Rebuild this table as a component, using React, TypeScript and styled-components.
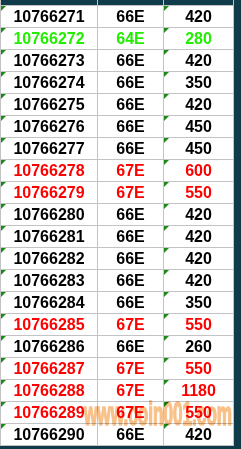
import styled, { createGlobalStyle } from 'styled-components';

const GlobalStyle = createGlobalStyle`
    html, body {
        margin: 0;
        padding: 0;
        background: #0f3b4b;
    }
    body {
        font-family: "Liberation Sans", Arial, sans-serif;
    }
`;

const Page = styled.div`
    position: relative;
    width: 241px;
    height: 449px;
    overflow: hidden;
    background: #0f3b4b;
`;

const Sheet = styled.div`
    display: grid;
    grid-template-columns: 96px 65px 69px;
    grid-auto-rows: 21px;
    grid-template-rows: 5px;
    gap: 1px;
    width: 234px;
    padding: 0 1px 1px 1px;
    box-sizing: border-box;
    background: #c3c3c3;
`;

const HeadCell = styled.div`
    background: #0f3b4b;
`;

const Cell = styled.div<{ $tone: string; $mark?: boolean }>`
    position: relative;
    display: flex;
    align-items: center;
    justify-content: center;
    background: #ffffff;
    color: ${(p) => p.$tone};
    font-size: 16px;
    font-weight: bold;
    line-height: 1;
    &::before {
        content: '';
        display: ${(p) => (p.$mark ? 'block' : 'none')};
        position: absolute;
        top: 0;
        left: 0;
        border-top: 5px solid #1b8a1b;
        border-right: 5px solid transparent;
    }
`;

// site watermark laid over the last rows
const Watermark = styled.div`
    position: absolute;
    left: 84px;
    top: 395px;
    font-size: 33px;
    font-weight: bold;
    color: #f9c088;
    -webkit-text-stroke: 1.6px #f9c088;
    mix-blend-mode: multiply;
    transform: scaleX(0.52);
    transform-origin: left top;
    white-space: nowrap;
    pointer-events: none;
`;

const colours: Record<string, string> = {
    k: '#000000',
    g: '#22ee00',
    r: '#ff0000',
};

const rows: [string, string, string, string][] = [
    ['10766271', '66E', '420', 'k'],
    ['10766272', '64E', '280', 'g'],
    ['10766273', '66E', '420', 'k'],
    ['10766274', '66E', '350', 'k'],
    ['10766275', '66E', '420', 'k'],
    ['10766276', '66E', '450', 'k'],
    ['10766277', '66E', '450', 'k'],
    ['10766278', '67E', '600', 'r'],
    ['10766279', '67E', '550', 'r'],
    ['10766280', '66E', '420', 'k'],
    ['10766281', '66E', '420', 'k'],
    ['10766282', '66E', '420', 'k'],
    ['10766283', '66E', '420', 'k'],
    ['10766284', '66E', '350', 'k'],
    ['10766285', '67E', '550', 'r'],
    ['10766286', '66E', '260', 'k'],
    ['10766287', '67E', '550', 'r'],
    ['10766288', '67E', '1180', 'r'],
    ['10766289', '67E', '550', 'r'],
    ['10766290', '66E', '420', 'k'],
];

function App() {
    return (
        <Page>
            <GlobalStyle />
            <Sheet>
                <HeadCell />
                <HeadCell />
                <HeadCell />
                {rows.map(([id, grade, price, tone]) => (
                    <>
                        <Cell key={id + 'a'} $tone={colours[tone]} $mark>{id}</Cell>
                        <Cell key={id + 'b'} $tone={colours[tone]}>{grade}</Cell>
                        <Cell key={id + 'c'} $tone={colours[tone]} $mark>{price}</Cell>
                    </>
                ))}
            </Sheet>
            <Watermark>www.coin001.com</Watermark>
        </Page>
    );
}

export default App;
